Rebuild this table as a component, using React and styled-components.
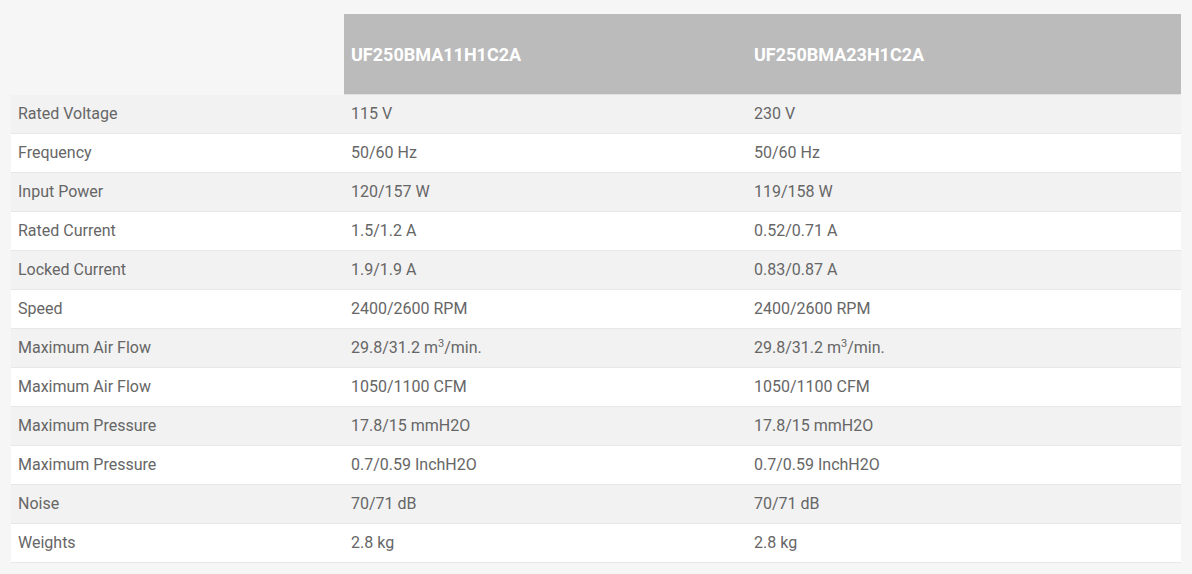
import styled, { createGlobalStyle } from 'styled-components';

const GlobalStyle = createGlobalStyle`
  html, body {
    margin: 0;
    padding: 0;
    background: #f6f6f6;
    font-family: Roboto, 'Liberation Sans', sans-serif;
  }
`;

const Page = styled.div`
  padding: 14px 11px 12px 11px;
`;

const SpecTable = styled.table`
  width: 1170px;
  border-collapse: collapse;
  table-layout: fixed;
`;

const HeadCell = styled.th`
  height: 80px;
  padding: 0 7px;
  text-align: left;
  background: ${(p) => (p.$empty ? 'transparent' : '#bbbbbb')};
  color: #ffffff;
  font-size: 18px;
  font-weight: 700;
  border-bottom: 1px solid ${(p) => (p.$empty ? 'transparent' : '#e2e2e2')};
`;

const Row = styled.tr`
  background: ${(p) => (p.$odd ? '#f2f2f2' : '#ffffff')};
`;

const Cell = styled.td`
  height: 36px;
  padding: 0 7px 2px 7px;
  color: #666666;
  font-size: 16px;
  border-bottom: 1px solid #e8e8e8;
  white-space: nowrap;
`;

const Sup = styled.sup`
  font-size: 11px;
  line-height: 0;
`;

const rows = [
  ['Rated Voltage', '115 V', '230 V'],
  ['Frequency', '50/60 Hz', '50/60 Hz'],
  ['Input Power', '120/157 W', '119/158 W'],
  ['Rated Current', '1.5/1.2 A', '0.52/0.71 A'],
  ['Locked Current', '1.9/1.9 A', '0.83/0.87 A'],
  ['Speed', '2400/2600 RPM', '2400/2600 RPM'],
  ['Maximum Air Flow', 'flow', 'flow'],
  ['Maximum Air Flow', '1050/1100 CFM', '1050/1100 CFM'],
  ['Maximum Pressure', '17.8/15 mmH2O', '17.8/15 mmH2O'],
  ['Maximum Pressure', '0.7/0.59 InchH2O', '0.7/0.59 InchH2O'],
  ['Noise', '70/71 dB', '70/71 dB'],
  ['Weights', '2.8 kg', '2.8 kg'],
];

const renderValue = (v) =>
  v === 'flow' ? (
    <>
      29.8/31.2 m<Sup>3</Sup>/min.
    </>
  ) : (
    v
  );

export default function App() {
  return (
    <>
      <GlobalStyle />
      <Page>
        <SpecTable>
          <colgroup>
            <col style={{ width: '333px' }} />
            <col style={{ width: '403px' }} />
            <col style={{ width: '434px' }} />
          </colgroup>
          <thead>
            <tr>
              <HeadCell $empty />
              <HeadCell>UF250BMA11H1C2A</HeadCell>
              <HeadCell>UF250BMA23H1C2A</HeadCell>
            </tr>
          </thead>
          <tbody>
            {rows.map((r, i) => (
              <Row key={i} $odd={i % 2 === 0}>
                <Cell>{r[0]}</Cell>
                <Cell>{renderValue(r[1])}</Cell>
                <Cell>{renderValue(r[2])}</Cell>
              </Row>
            ))}
          </tbody>
        </SpecTable>
      </Page>
    </>
  );
}
